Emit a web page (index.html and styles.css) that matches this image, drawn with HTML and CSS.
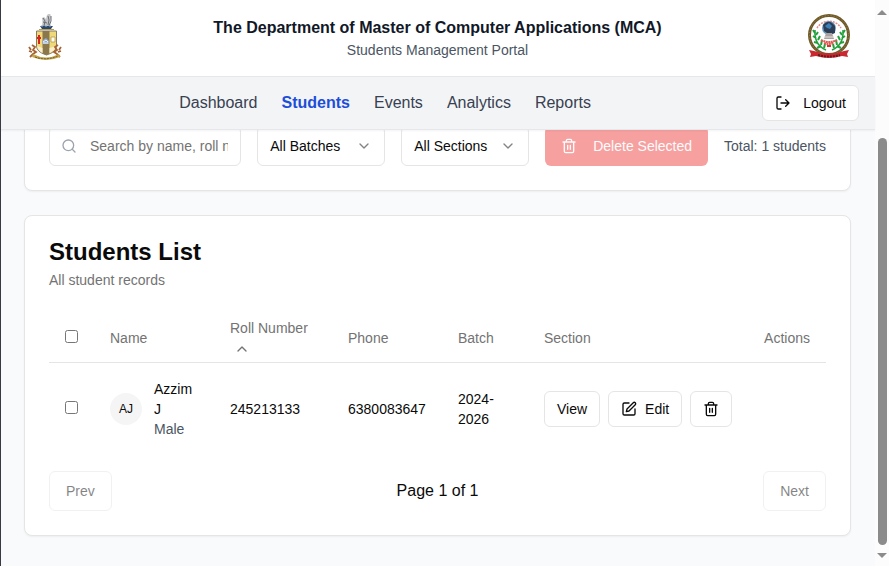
FILE: index.html
```html
<!DOCTYPE html>
<html lang="en">
<head>
<meta charset="utf-8">
<meta name="viewport" content="width=device-width, initial-scale=1">
<title>Students</title>
<link rel="stylesheet" href="styles.css">
</head>
<body>
<svg class="sprite" aria-hidden="true">
  <symbol id="trash" viewBox="0 0 24 24"><path d="M3 6h18M19 6v14a2 2 0 0 1-2 2H7a2 2 0 0 1-2-2V6M8 6V4a2 2 0 0 1 2-2h4a2 2 0 0 1 2 2v2M10 11v6M14 11v6"/></symbol>
  <symbol id="chevron" viewBox="0 0 24 24"><path d="m6 9 6 6 6-6"/></symbol>
</svg>
<div class="shell">
  <div class="app">
    <header class="topbar">
      <svg class="logo" viewBox="0 0 44 48" role="img" aria-label="College crest">
        <path d="M18 12 18.500 8l-.5-4 2-1 2 2 1-4 3-2 1 4-1 6 1 4-4 1Z" fill="#c3c5c7"/>
        <path d="m19 4 2 3-1 5m4-10 1 4-1 5m3-9 0 5-2 5m-6-4 4 1" fill="none" stroke="#6a6d72"/>
        <path d="M16 12h13l-2 3H18Z" fill="#29476f"/>
        <path d="M17 12h2m2 0h2m2 0h2" stroke="#8fb4d8"/>
        <path d="M15 15.500h15" stroke="#b79d4d"/>
        <path d="M12.500 17h20v15q0 6-10 9-10-3-10-9Z" fill="#f0d978" stroke="#887b60"/>
        <path d="M18.500 17h7v22.500l-3 1.500-4-1.500Z" fill="#8a784c"/>
        <path d="M13 32q1 5 5.500 7v-5Zm19 0q-1 5-6.500 7v-5Z" fill="#f7efcf"/>
        <path d="M15 21v9m-2-6h4" stroke="#d9251e" stroke-width="2"/>
        <path d="m18 30 1-4 3-2 3 3v3Z" fill="#8fabcf"/>
        <path d="m19 28 3-2 2 2m-5 1h5" fill="none" stroke="#f1f3f5"/>
        <path d="M27 23h4v5h-4Z" fill="#fffdf2" stroke="#a9904c" stroke-width=".7"/>
        <path d="m8 31 3 2-2 3 3 2-3 2-3 3m1-7-2-3m3 5-3-1m29-6-3 2 2 3-3 2 3 2 3 3m-1-7 2-3m-3 5 3-1" fill="none" stroke="#a76332" stroke-width="1.800"/>
        <path d="M9 40q13 7 26 0l1 3q-14 6-28 0Z" fill="#c4a549"/>
        <path d="M11 43q11 4 23-1" fill="none" stroke="#675c2e" stroke-dasharray="2 1"/>
      </svg>
      <div class="titles">
        <h1>The Department of Master of Computer Applications (MCA)</h1>
        <p>Students Management Portal</p>
      </div>
      <svg class="logo" viewBox="0 0 44 48" role="img" aria-label="Department emblem">
        <circle cx="22" cy="21" r="19.500" fill="#fff" stroke="#6f5a2c" stroke-width="3"/>
        <circle cx="22" cy="21" r="19.500" fill="none" stroke="#a08a48" stroke-dasharray="1 2"/>
        <path d="M10 14a14 14 0 0 1 24 0" fill="none" stroke="#e58a87" stroke-width="1.500" stroke-dasharray="2 1"/>
        <path d="M8 16q-1 15 11 20M36 16q1 15-11 20" fill="none" stroke="#21a03c" stroke-width="1.500"/>
        <path d="m8 19-2-3m3 8-3-2m5 7-4-1m7 4-4 2M9 21l2-3m0 8 2-4m1 9 1-5m2 8 1-4M36 19l2-3m-3 8 3-2m-5 7 4-1m-7 4 4 2m1-13-2-3m0 8-2-4m-1 9-1-5m-2 8-1-4" stroke="#21a03c" stroke-width="2"/>
        <circle cx="22" cy="14" r="7" fill="#7299bd"/>
        <path d="M16 11q6-7 12 1v7l-5 2-6-4Z" fill="#2c3d55"/>
        <path d="m18 12 4-3 3 3-2 3-3-1Z" fill="#3d7fb8"/>
        <path d="M19 19h6l2 6H17Z" fill="#a9a2a0"/>
        <path d="M17 23h10" stroke="#e9e2dc"/>
        <path d="M14 26q8 4 16 0m-13 3q5 2 10 0" fill="none" stroke="#e05a55" stroke-width="2" stroke-dasharray="2 .5"/>
        <path d="M20 32h4" stroke="#d9332e" stroke-width="2"/>
        <path d="m2 36 5 1q15 5 30 0l5-1-2 4 1 3-6-1q-13 4-26 0l-6 1 1-3Z" fill="#c92830"/>
        <path d="M11 41q11 3 22 0" fill="none" stroke="#601c1d" stroke-width="2" stroke-dasharray="2 1"/>
      </svg>
    </header>
    <nav class="nav" aria-label="Main">
      <div class="links">
        <a href="#">Dashboard</a>
        <a href="#" class="active" aria-current="page">Students</a>
        <a href="#">Events</a>
        <a href="#">Analytics</a>
        <a href="#">Reports</a>
      </div>
      <button class="btn logout" type="button"><svg class="icon" viewBox="0 0 24 24"><path d="M9 21H5a2 2 0 0 1-2-2V5a2 2 0 0 1 2-2h4M16 17l5-5-5-5M21 12H9"/></svg>Logout</button>
    </nav>
    <main class="content">
      <section class="card filters" aria-label="Filters">
        <label class="field search">
          <svg class="icon" viewBox="0 0 24 24"><circle cx="11" cy="11" r="8"/><path d="m21 21-4.300-4.300"/></svg>
          <input type="text" placeholder="Search by name, roll number..." aria-label="Search students">
        </label>
        <div class="field pick">
          <select aria-label="Batch"><option>All Batches</option></select>
          <svg class="icon"><use href="#chevron"/></svg>
        </div>
        <div class="field pick">
          <select aria-label="Section"><option>All Sections</option></select>
          <svg class="icon"><use href="#chevron"/></svg>
        </div>
        <button class="delete" type="button" disabled><svg class="icon"><use href="#trash"/></svg>Delete Selected</button>
        <span class="total">Total: 1 students</span>
      </section>
      <section class="card">
        <h2>Students List</h2>
        <p class="sub">All student records</p>
        <table>
          <colgroup><col class="c-check"><col class="c-name"><col class="c-roll"><col class="c-phone"><col class="c-batch"><col class="c-section"><col class="c-actions"></colgroup>
          <thead>
            <tr>
              <th><input type="checkbox" aria-label="Select all"></th>
              <th>Name</th>
              <th>Roll Number <svg class="icon sort" viewBox="0 0 24 24"><path d="m18 15-6-6-6 6"/></svg></th>
              <th>Phone</th>
              <th>Batch</th>
              <th>Section</th>
              <th class="end">Actions</th>
            </tr>
          </thead>
          <tbody>
            <tr>
              <td><input type="checkbox" aria-label="Select Azzim J"></td>
              <td>
                <div class="person">
                  <span class="avatar">AJ</span>
                  <div><div>Azzim J</div><div class="muted">Male</div></div>
                </div>
              </td>
              <td>245213133</td>
              <td>6380083647</td>
              <td>2024-2026</td>
              <td>
                <div class="actions">
                  <button class="btn" type="button">View</button>
                  <button class="btn" type="button"><svg class="icon" viewBox="0 0 24 24"><path d="M12 3H5a2 2 0 0 0-2 2v14a2 2 0 0 0 2 2h14a2 2 0 0 0 2-2v-7"/><path d="M18.400 2.600a2.100 2.100 0 0 1 3 3L12 15l-4 1 1-4Z"/></svg>Edit</button>
                  <button class="btn" type="button" aria-label="Delete"><svg class="icon"><use href="#trash"/></svg></button>
                </div>
              </td>
              <td></td>
            </tr>
          </tbody>
        </table>
        <div class="pager">
          <button class="btn page" type="button" disabled>Prev</button>
          <span>Page 1 of 1</span>
          <button class="btn page" type="button" disabled>Next</button>
        </div>
      </section>
    </main>
  </div>
  <div class="scrollbar" aria-hidden="true">
    <span class="arrow up"></span>
    <span class="track"><span class="thumb"></span></span>
    <span class="arrow down"></span>
  </div>
</div>
</body>
</html>
```
FILE: styles.css
```css
* { box-sizing: border-box; }

body {
  margin: 0;
  background: #f9fafb;
  color: #0a0a0a;
  font: 14px/20px "Liberation Sans", Arial, sans-serif;
}

h1, h2, p { margin: 0; }

button, input, select { font: inherit; color: inherit; }

.sprite { display: none; }

.shell {
  display: flex;
  height: 100vh;
  overflow: hidden;
}

.app {
  position: relative;
  flex: 1;
  min-width: 0;
}

/* window edge, drawn over the content */
.app::after {
  content: "";
  position: absolute;
  inset: 0 auto 0 0;
  z-index: 2;
  width: 1px;
  background: #393946;
}

.topbar {
  position: relative;
  z-index: 1;
  display: flex;
  align-items: center;
  justify-content: space-between;
  padding: 14px 24px;
  background: #fff;
  border-bottom: 1px solid #e5e7eb;
}

.logo { width: 44px; height: 48px; }

.titles { text-align: center; }

.titles h1 {
  color: #111827;
  font-size: 16px;
  line-height: 24px;
}

.titles p { color: #4b5563; }

.nav {
  position: relative;
  z-index: 1;
  display: flex;
  align-items: center;
  gap: 8px;
  padding: 8px 16px;
  background: #f3f4f6;
  border-bottom: 1px solid #e5e7eb;
  box-shadow: 0 1px 2px rgb(0 0 0 / 5%);
}

.links {
  display: flex;
  flex: 1;
  justify-content: center;
  gap: 24px;
  font-size: 16px;
}

.links a { color: #374151; text-decoration: none; }
.links .active { color: #1d4ed8; font-weight: 700; }

.icon {
  flex: none;
  width: 16px;
  height: 16px;
  fill: none;
  stroke: currentColor;
  stroke-width: 2;
  stroke-linecap: round;
  stroke-linejoin: round;
}

.btn {
  display: inline-flex;
  align-items: center;
  justify-content: center;
  gap: 8px;
  height: 36px;
  padding: 0 12px;
  background: #fff;
  border: 1px solid #e5e5e5;
  border-radius: 6px;
}

.logout { gap: 12px; }

/* the scrolled page sits partly under the bars */
.content {
  display: grid;
  gap: 24px;
  margin-top: -29px;
  padding: 0 24px 24px;
}

.card {
  min-width: 0;
  padding: 24px;
  background: #fff;
  border: 1px solid #e5e5e5;
  border-radius: 8px;
  box-shadow: 0 1px 2px rgb(0 0 0 / 5%);
}

.filters {
  display: flex;
  align-items: center;
  gap: 16px;
}

.field { position: relative; }

.field input,
.field select {
  width: 100%;
  height: 40px;
  padding: 0 12px;
  background: #fff;
  border: 1px solid #e5e5e5;
  border-radius: 6px;
  appearance: none;
}

.field .icon {
  position: absolute;
  top: 12px;
  pointer-events: none;
}

.search { flex: 1; min-width: 0; }
.search input { padding-left: 40px; }
.search input::placeholder { color: #737373; }
.search .icon { left: 12px; color: #9ca3af; }

.pick { flex: none; width: 128px; }
.pick .icon { right: 13px; opacity: 0.5; }

.delete {
  display: flex;
  flex: none;
  align-items: center;
  gap: 16px;
  height: 40px;
  padding: 0 16px;
  background: #ef4444;
  border: 0;
  border-radius: 6px;
  color: #fafafa;
  opacity: 0.5;
}

.total { flex: none; color: #4b5563; }

h2 {
  font-size: 24px;
  line-height: 24px;
}

.sub {
  margin: 6px 0 24px;
  color: #737373;
}

table {
  width: 100%;
  border-collapse: collapse;
  table-layout: fixed;
}

.c-check { width: 45px; }
.c-name { width: 120px; }
.c-roll { width: 118px; }
.c-phone { width: 110px; }
.c-batch { width: 86px; }
.c-actions { width: 78px; }

th {
  height: 48px;
  padding: 0 16px;
  color: #737373;
  font-weight: 400;
  text-align: left;
}

thead tr { border-bottom: 1px solid #e5e5e5; }

td { padding: 16px; }

.end { text-align: right; }

input[type="checkbox"] { margin: 0; }

.sort { margin-left: 4px; vertical-align: middle; }

.person {
  display: flex;
  align-items: center;
  gap: 12px;
}

.avatar {
  display: grid;
  flex: none;
  place-items: center;
  width: 32px;
  height: 32px;
  background: #f5f5f5;
  border-radius: 50%;
  font-size: 12px;
}

.muted { color: #4b5563; }

.actions { display: flex; gap: 8px; }

.pager {
  display: flex;
  align-items: center;
  justify-content: space-between;
  margin-top: 16px;
  font-size: 16px;
}

.page {
  height: 40px;
  padding: 0 16px;
  font-size: 14px;
  opacity: 0.5;
}

.scrollbar {
  display: flex;
  flex: none;
  flex-direction: column;
  align-items: center;
  width: 14px;
  padding: 10px 0 8px;
  background: #fcfcfc;
}

.arrow {
  border: 5px solid transparent;
}

.up { border-top: 0; border-bottom: 5px solid #8b8b8b; }
.down { border-bottom: 0; border-top: 5px solid #8b8b8b; }

.track {
  display: flex;
  flex: 1;
  flex-direction: column;
  justify-content: flex-end;
  padding: 8px 0;
}

.thumb {
  width: 9px;
  height: 78%;
  background: #8b8b8b;
  border-radius: 5px;
}
```
